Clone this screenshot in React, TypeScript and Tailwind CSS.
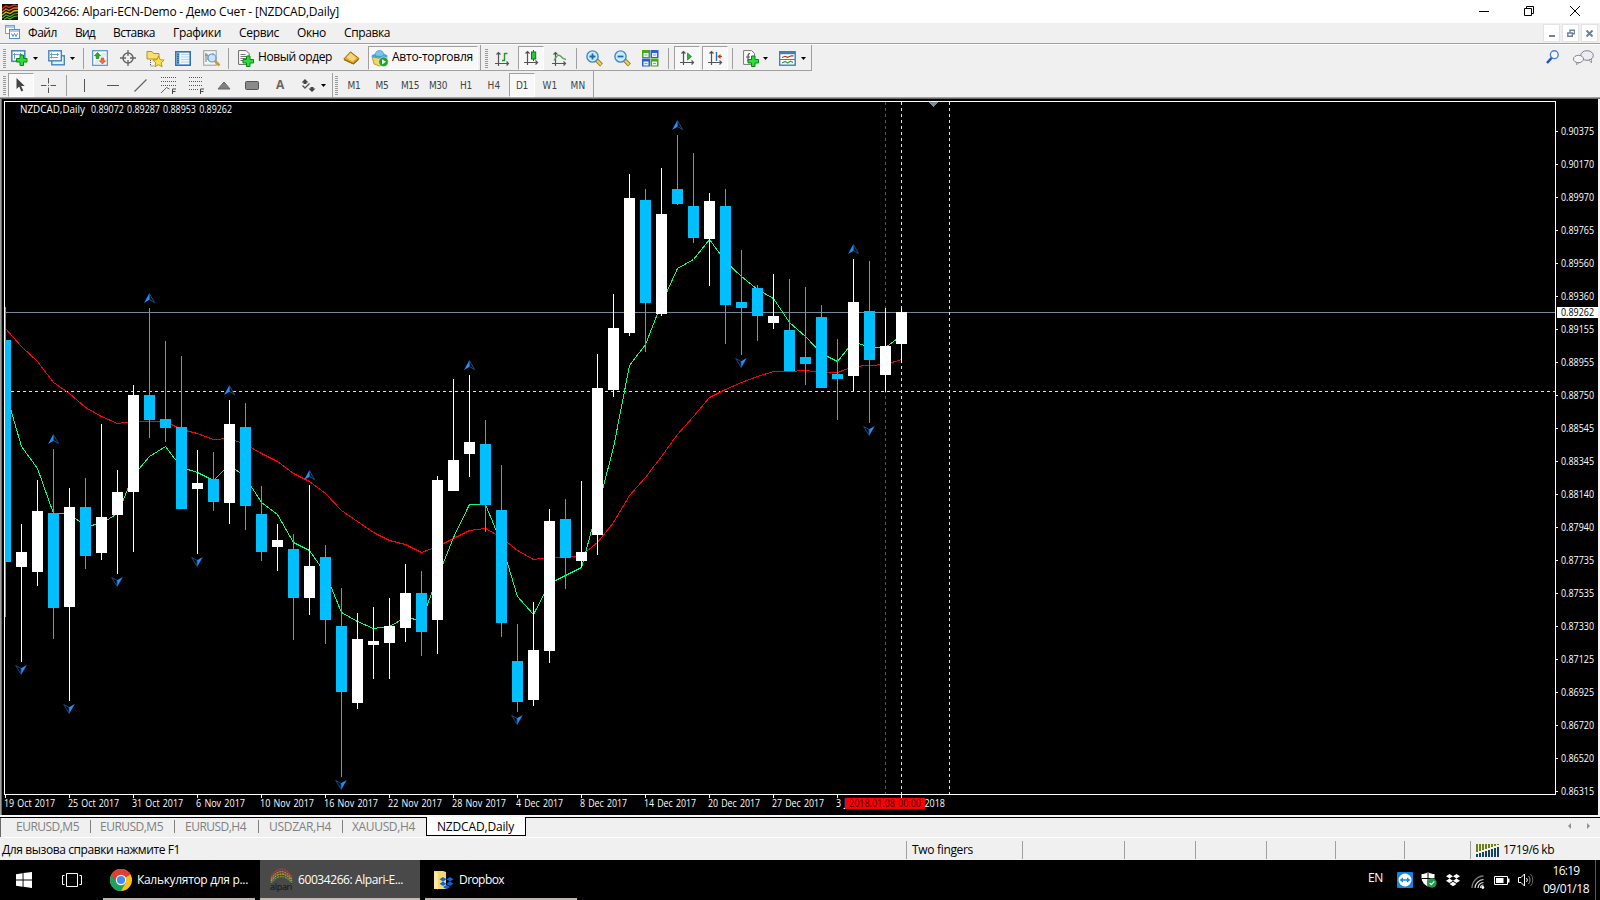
import { useLayoutEffect, useRef, type ReactNode } from "react";

/* ---------- text fitted to a fixed width ---------- */

function Label({ w, children, className = "" }: { w: number; children: string; className?: string }) {
  const ref = useRef<HTMLSpanElement>(null);
  useLayoutEffect(() => {
    const el = ref.current;
    if (!el) return;
    el.style.letterSpacing = "0px";
    const natural = el.getBoundingClientRect().width;
    el.style.letterSpacing = `${(w - natural) / children.length}px`;
  }, [w, children]);
  return (
    <span ref={ref} className={`inline-block shrink-0 whitespace-pre ${className}`}>
      {children}
    </span>
  );
}

/* ---------- toolbar pieces ---------- */

function Icon({ w, h, className = "", children }: { w: number; h: number; className?: string; children: ReactNode }) {
  return (
    <svg width={w} height={h} viewBox={`0 0 ${w} ${h}`} fill="none" className={`shrink-0 ${className}`}>
      {children}
    </svg>
  );
}

function Grip() {
  return (
    <div className="flex w-2 shrink-0 justify-center">
      <Icon w={3} h={19}>
        {[0, 2, 4, 6, 8, 10, 12, 14, 16, 18].map((y) => (
          <rect key={y} x="0" y={y} width="3" height="1" fill="#9a9a9a" />
        ))}
      </Icon>
    </div>
  );
}

function Sep() {
  return <div className="h-[21px] w-px shrink-0 bg-[#a0a0a0]" />;
}

function Caret() {
  return (
    <Icon w={5} h={3}>
      <path d="M0 0h5L2.5 3z" fill="#000" />
    </Icon>
  );
}

function Plus({ x, y }: { x: number; y: number }) {
  return (
    <path
      transform={`translate(${x} ${y})`}
      d="M4 .5h3.5V4H11v3.5H7.5V11H4V7.5H.5V4H4z"
      fill="#2fdc3c"
      stroke="#078a12"
    />
  );
}

function Axes() {
  return (
    <g stroke="#555" strokeWidth="1.2">
      <path d="M3.500 1v14M0 12.500h14M1.500 3.500l2-2 2 2M11.500 10.500l2 2-2 2" />
    </g>
  );
}

const pressed =
  "flex shrink-0 items-center justify-center border border-t-[#a0a0a0] border-l-[#a0a0a0] border-b-white border-r-white bg-[#f8f8f8]";

function Magnifier({ minus = false }: { minus?: boolean }) {
  return (
    <Icon w={18} h={17}>
      <path d="M10.5 10l5 5" stroke="#9b7a16" strokeWidth="4" />
      <path d="M10.5 10l4.6 4.6" stroke="#f2cf56" strokeWidth="2.2" />
      <circle cx="6.5" cy="6.5" r="5.6" fill="#cdeafd" stroke="#3d8bc4" strokeWidth="1.4" />
      <path d={minus ? "M3.5 6.5h6" : "M3.5 6.5h6M6.5 3.5v6"} stroke="#1e6aa8" strokeWidth="1.8" />
    </Icon>
  );
}

function MainToolbar() {
  return (
    <div className="flex h-[26px] w-[812px] items-center border-b border-r border-[#a0a0a0] pt-px">
      <div className="flex w-[11px] shrink-0"><Grip /></div>
      <div className="flex w-[37px] shrink-0 items-center gap-[5px]">
        <Icon w={17} h={16}>
          <rect x=".8" y=".8" width="13" height="10.5" fill="#fff" stroke="#4384bd" strokeWidth="1.5" />
          <path d="M3.5 3v6M2 4.500h9M9.500 3v4" stroke="#6aa0cc" />
          <Plus x={5} y={4.500} />
        </Icon>
        <Caret />
      </div>
      <div className="flex w-[35px] shrink-0 items-center gap-[5px]">
        <Icon w={17} h={16}>
          <rect x="3.800" y="5.800" width="12.500" height="9" fill="#e5f1fa" stroke="#4384bd" strokeWidth="1.4" />
          <rect x=".8" y=".8" width="12.500" height="10" fill="#fff" stroke="#4384bd" strokeWidth="1.4" />
          <path d="M3.500 2.500v6M2 4.500h9M9.500 3v3M2 7.500h8" stroke="#6aa0cc" />
        </Icon>
        <Caret />
      </div>
      <Sep />
      <Icon w={16} h={16} className="ml-[8px]">
        <rect x=".7" y=".7" width="14.600" height="14.600" fill="#fff" stroke="#4e93cd" strokeWidth="1.2" />
        <path d="M9 4h5M9 6h5M3 11h4M3 13h4" stroke="#c6d6e6" />
        <path d="M5.500 2.500l3.200 3.200H6.900V8.500H4.100V5.700H2.300z" fill="#28b02c" stroke="#0d7d12" strokeWidth=".6" />
        <path d="M10.500 14l3.200-3.200h-1.800V8H9.100v2.800H7.300z" fill="#f2703c" stroke="#c33f12" strokeWidth=".6" />
      </Icon>
      <Icon w={16} h={16} className="ml-[12px]">
        <circle cx="8" cy="8" r="5" stroke="#666" strokeWidth="1.500" />
        <path d="M8 0v6M8 10v6M0 8h6M10 8h6" stroke="#666" strokeWidth="1.300" />
      </Icon>
      <Icon w={19} h={17} className="ml-[10px]">
        <path d="M1 9V1.500h5l1.500 2H13V9z" fill="#f7df73" stroke="#b8921f" />
        <path d="M4.500 10v6h3" stroke="#555" strokeDasharray="1 1" />
        <path d="M12.500 6l1.700 3.700 4 .4-3 2.700.9 4-3.600-2.100-3.600 2.100.9-4-3-2.700 4-.4z" fill="#fbe04e" stroke="#b88a12" strokeWidth=".9" />
      </Icon>
      <Icon w={16} h={15} className="ml-[10px]">
        <rect x=".8" y=".8" width="14.400" height="13.400" fill="#f2f8ff" stroke="#2f74b8" strokeWidth="1.600" />
        <path d="M3 1.500v12" stroke="#5b9bd8" strokeWidth="2.600" />
        <path d="M3 3v10" stroke="#17345a" strokeDasharray="1 1" />
        <path d="M6 3.500h8M6 6h8M6 8.500h8M6 11h8" stroke="#b7d1ea" />
      </Icon>
      <Icon w={19} h={17} className="ml-[12px]">
        <rect x=".7" y=".7" width="12.500" height="14.500" fill="#f5f5f5" stroke="#9a9a9a" />
        <path d="M3 3v9M5 5v5M10 3v3M2 5h3" stroke="#777" />
        <path d="M12 11l4.500 4.500" stroke="#c79d2c" strokeWidth="2.600" />
        <circle cx="9" cy="8" r="4" fill="#bfe0f5cc" stroke="#5c9fd0" strokeWidth="1.200" />
      </Icon>
      <div className="w-[6px] shrink-0" />
      <Sep />
      <Icon w={17} h={17} className="ml-[9px]">
        <path d="M.6.6h7.500l3 3v10.800H.6z" fill="#fff" stroke="#666" />
        <path d="M2.500 4.500h5M2.500 6.500h6M2.500 8.500h6M2.500 10.500h3" stroke="#777" />
        <Plus x={4.500} y={5.500} />
      </Icon>
      <Label w={74} className="ml-[3px] text-[12px] leading-[16px] -mt-[3px]">Новый ордер</Label>
      <Icon w={17} h={14} className="ml-[11px]">
        <path d="M.8 8L7.500.8 16 7.500 10.500 13z" fill="#e0aa34" stroke="#9a6b12" />
        <path d="M3.500 6.500L7.500 2l6 5-4 3.500z" fill="#f7d478" />
        <path d="M1 8.800l9.500 4 5-4.500" stroke="#9a6b12" strokeWidth="1.200" />
      </Icon>
      <div className={`${pressed} ml-[8px] h-[24px] w-[110px] justify-start`}>
        <Icon w={18} h={17} className="ml-[2px]">
          <path d="M1 6.500h15l-1.500 8L8.500 16 3 14z" fill="#f5d45c" stroke="#b08b1c" strokeWidth=".8" />
          <ellipse cx="8.500" cy="6" rx="8" ry="2.600" fill="#4ea3d8" />
          <path d="M4 5.500C4 2 6 .5 8.500.5S13 2 13 5.500c-2 1.200-7 1.200-9 0z" fill="#79c4ea" stroke="#3b89ba" strokeWidth=".6" />
          <circle cx="12.500" cy="11.800" r="4.800" fill="#18a528" stroke="#fff" strokeWidth=".5" />
          <path d="M11 9.200v5.200l4-2.600z" fill="#fff" />
        </Icon>
        <Label w={81} className="ml-[3px] text-[12px] leading-[16px] -mt-[3px]">Авто-торговля</Label>
      </div>
      <div className="w-[2px] shrink-0" />
      <div className="h-[26px] w-px shrink-0 bg-[#a0a0a0]" />
      <div className="flex w-[9px] shrink-0 justify-end"><Grip /></div>
      <Icon w={15} h={15} className="ml-[5px]">
        <Axes />
        <path d="M9.500 2v8M9.500 2.500h3M7 9.500h3" stroke="#1f9a2a" strokeWidth="1.400" />
      </Icon>
      <div className={`${pressed} ml-[8px] h-[24px] w-[26px]`}>
        <Icon w={15} h={16}>
          <Axes />
          <path d="M9.500 0v11" stroke="#0b7a14" />
          <rect x="7.500" y="2" width="4.200" height="7" fill="#2bc93a" stroke="#0b7a14" />
        </Icon>
      </div>
      <Icon w={15} h={15} className="ml-[8px]">
        <Axes />
        <path d="M2 9.500C5 4 7 3 9 5.500s3 3 5 3" stroke="#4ea856" strokeWidth="1.400" />
      </Icon>
      <div className="w-[9px] shrink-0" />
      <Sep />
      <div className="w-[9px] shrink-0" />
      <Magnifier />
      <div className="w-[10px] shrink-0" />
      <Magnifier minus />
      <Icon w={17} h={17} className="ml-[10px]">
        <rect width="8" height="8" fill="#4aa51c" />
        <rect x="8.500" width="8" height="8" fill="#2f5fcf" />
        <rect y="8.500" width="8" height="8" fill="#2f5fcf" />
        <rect x="8.500" y="8.500" width="8" height="8" fill="#4aa51c" />
        <path d="M1.500 3h5v4h-5zM10 3h5v4h-5zM1.500 11.500h5v4h-5zM10 11.500h5v4h-5z" fill="#e8f2ff" />
        <path d="M2.500 5h3M11 5h3M2.500 13.500h3M11 13.500h3" stroke="#7aa0d8" />
      </Icon>
      <div className="w-[9px] shrink-0" />
      <Sep />
      <div className={`${pressed} ml-[5px] h-[24px] w-[26px]`}>
        <Icon w={15} h={16}>
          <Axes />
          <path d="M7.500 3v7l4-3.500z" fill="#25b533" stroke="#0f8219" strokeWidth=".7" />
        </Icon>
      </div>
      <div className={`${pressed} ml-[2px] h-[24px] w-[26px]`}>
        <Icon w={15} h={16}>
          <Axes />
          <path d="M8.500 2v9" stroke="#2f6da8" strokeWidth="1.400" />
          <path d="M14 6.500h-4" stroke="#b5401b" strokeWidth="1.400" />
          <path d="M9.500 6.500l3-2.500v5z" fill="#b5401b" />
        </Icon>
      </div>
      <div className="w-[4px] shrink-0" />
      <Sep />
      <Icon w={17} h={17} className="ml-[10px]">
        <path d="M.6.6h8l3 3v10.800H.6z" fill="#fff" stroke="#777" />
        <path d="M7 3.500c-2 0-2 1-2 3v5M3 7h4" stroke="#555" strokeWidth="1.200" />
        <Plus x={4.500} y={5.500} />
      </Icon>
      <div className="w-[3px] shrink-0" />
      <Caret />
      <Icon w={17} h={15} className="ml-[11px]">
        <rect x=".7" y=".7" width="15.500" height="13.500" fill="#fff" stroke="#3d7fb9" strokeWidth="1.400" />
        <path d="M1 2h15" stroke="#3d7fb9" strokeWidth="2.400" />
        <path d="M1 8.500h15" stroke="#3d7fb9" />
        <path d="M3 6.500l3-1.200 2.500 1 4-1.500h2" stroke="#a2391c" strokeWidth="1.200" />
        <path d="M3 12l3-1.500 2.500 1.500 3-1.800 2.500 1.300" stroke="#2fa33c" strokeWidth="1.200" />
      </Icon>
      <div className="w-[5px] shrink-0" />
      <Caret />
    </div>
  );
}

const periods: [string, number][] = [
  ["M1", 13], ["M5", 13], ["M15", 18], ["M30", 18], ["H1", 12], ["H4", 13], ["D1", 12], ["W1", 15], ["MN", 15],
];

function LineToolbar() {
  return (
    <div className="flex h-[26px] w-[594px] items-center border-r border-[#a0a0a0] pt-[2px]">
      <div className="flex w-[8px] shrink-0"><Grip /></div>
      <div className={`${pressed} h-[24px] w-[26px]`}>
        <Icon w={9} h={14} className="-ml-[1px]">
          <path d="M.5 0v11l2.700-2.400L5.300 13.500l2-.9-2.200-4.700h3.600z" fill="#444" />
        </Icon>
      </div>
      <Icon w={16} h={15} className="ml-[7px]">
        <path d="M7.500 0v5.500M7.500 9.500V15M0 7.500h5.500M9.500 7.500H15" stroke="#555" />
        <rect x="7" y="7" width="1" height="1" fill="#555" />
      </Icon>
      <div className="w-[9px] shrink-0" />
      <Sep />
      <Icon w={1} h={13} className="ml-[17px]"><path d="M.5 0v13" stroke="#555" /></Icon>
      <Icon w={12} h={1} className="ml-[22px]"><path d="M0 .5h12" stroke="#555" /></Icon>
      <Icon w={13} h={13} className="ml-[15px]"><path d="M.5 12.500l12-12" stroke="#666" strokeWidth="1.200" /></Icon>
      <Icon w={16} h={17} className="ml-[14px]">
        <path d="M0 .5h16M0 4.500h16M0 8.500h16" stroke="#555" strokeDasharray="1 1" />
        <path d="M0 16l5.500-5.500 3 1.500" stroke="#666" />
        <path d="M11.500 17v-5h3.500M11.500 14.500h3" stroke="#444" />
      </Icon>
      <Icon w={15} h={17} className="ml-[12px]">
        <path d="M0 .5h14M0 4.500h14M0 8.500h14M0 12.500h9" stroke="#555" strokeDasharray="1 1" />
        <path d="M11.500 17v-5h3.500M11.500 14.500h3" stroke="#444" />
      </Icon>
      <Icon w={14} h={9} className="ml-[13px]"><path d="M1 8L7 1l6 7z" fill="#808080" stroke="#666" /></Icon>
      <Icon w={14} h={9} className="ml-[14px]"><rect x=".5" y=".5" width="13" height="8" rx="1" fill="#8a8a8a" stroke="#555" /></Icon>
      <span className="ml-[17px] w-[8px] shrink-0 text-[12px] font-bold leading-[14px] text-[#666]">A</span>
      <Icon w={15} h={13} className="ml-[17px]">
        <path d="M4 0l3.500 3.500H5.500V5h-3V3.500H.5z" fill="#444" />
        <path d="M1.500 6.500L4 9l4.500-4.500" stroke="#555" strokeWidth="1.400" />
        <path d="M11 13l3.500-3.500h-2V8h-3v1.500h-2z" fill="#444" />
      </Icon>
      <div className="w-[5px] shrink-0" />
      <Caret />
      <div className="w-[6px] shrink-0" />
      <div className="h-[24px] w-px shrink-0 bg-[#a0a0a0]" />
      <div className="flex w-[7px] shrink-0 justify-end"><Grip /></div>
      {periods.map(([p, w]) => (
        <div
          key={p}
          className={
            p === "D1"
              ? `${pressed} h-[24px] w-[26px] mx-px`
              : "flex w-[28px] shrink-0 items-center justify-center"
          }
        >
          <Label w={w} className="pt-px font-['DejaVu_Sans_Condensed','DejaVu_Sans',sans-serif] text-[10px] leading-[14px] text-[#444]">
            {p}
          </Label>
        </div>
      ))}
    </div>
  );
}

/* ---------- chart ---------- */

// high, low, body top, body bottom (screen y), 1 = rising
const candles: [number, number, number, number, number][] = [
  [307, 617, 340, 562, 0], [524, 662, 552, 567, 1], [480, 586, 511, 572, 1], [449, 639, 513, 608, 0],
  [488, 701, 507, 607, 1], [478, 569, 507, 556, 0], [424, 560, 517, 553, 1], [470, 574, 492, 515, 1],
  [385, 552, 395, 492, 1], [308, 438, 395, 420, 0], [341, 442, 419, 428, 0], [356, 509, 427, 509, 0],
  [450, 554, 483, 489, 1], [452, 511, 479, 502, 0], [400, 524, 424, 503, 1], [403, 530, 427, 506, 0],
  [486, 561, 514, 552, 0], [524, 571, 540, 547, 1], [534, 640, 549, 598, 0], [485, 615, 566, 598, 1],
  [545, 644, 557, 620, 0], [588, 777, 626, 692, 0], [613, 709, 639, 703, 1], [607, 679, 641, 645, 1],
  [598, 679, 626, 643, 1], [564, 642, 593, 628, 1], [571, 656, 593, 632, 0], [476, 654, 480, 620, 1],
  [379, 491, 460, 491, 1], [375, 477, 442, 454, 1], [420, 532, 444, 505, 0], [465, 637, 510, 623, 0],
  [624, 712, 661, 702, 0], [602, 706, 650, 700, 1], [509, 663, 521, 651, 1], [499, 589, 519, 558, 0],
  [481, 567, 552, 561, 1], [354, 555, 388, 535, 1], [294, 397, 328, 390, 1], [174, 336, 198, 333, 1],
  [189, 352, 200, 303, 0], [168, 316, 214, 314, 1], [135, 205, 189, 204, 0], [153, 243, 206, 238, 0],
  [193, 286, 201, 239, 1], [189, 344, 206, 305, 0], [250, 355, 302, 308, 0], [285, 341, 288, 316, 0],
  [274, 329, 316, 323, 1], [279, 371, 330, 371, 0], [287, 385, 357, 364, 0], [305, 388, 317, 388, 0],
  [339, 420, 374, 379, 0], [259, 391, 302, 376, 1], [261, 423, 311, 360, 0], [308, 392, 346, 375, 1],
  [308, 363, 312, 344, 1],
];

const slow = [
  328, 346, 361, 382, 393, 407, 416, 423, 421, 421, 421, 429, 433, 439, 438, 444, 453, 461, 473, 481, 493, 510, 521,
  532, 540, 544, 552, 546, 538, 530, 528, 537, 550, 559, 557, 557, 555, 542, 522, 495, 477, 456, 434, 416, 397, 389,
  382, 376, 371, 371, 370, 372, 372, 366, 365, 364, 359,
];
const fast = [
  391, 446, 468, 513, 513, 526, 523, 513, 475, 456, 446, 467, 472, 480, 464, 477, 502, 514, 542, 550, 573, 612, 621,
  628, 626, 617, 620, 577, 537, 504, 504, 543, 596, 614, 583, 575, 567, 508, 447, 365, 344, 303, 268, 259, 239, 261,
  276, 289, 298, 322, 336, 353, 361, 341, 347, 347, 335,
];

const toPoints = (ys: number[]) => ys.map((y, k) => `${16 * k + 5.5},${y + 0.5}`).join(" ");

const upMarks = [3, 9, 14, 19, 29, 42, 53];
const downMarks = [1, 4, 7, 12, 21, 32, 46, 54];

const prices = [
  "0.90375", "0.90170", "0.89970", "0.89765", "0.89560", "0.89360", "0.89155", "0.88955", "0.88750", "0.88545",
  "0.88345", "0.88140", "0.87940", "0.87735", "0.87535", "0.87330", "0.87125", "0.86925", "0.86720", "0.86520",
  "0.86315",
];
const dates: [string, number][] = [
  ["19 Oct 2017", 51], ["25 Oct 2017", 51], ["31 Oct 2017", 51], ["6 Nov 2017", 49], ["10 Nov 2017", 54],
  ["16 Nov 2017", 54], ["22 Nov 2017", 54], ["28 Nov 2017", 54], ["4 Dec 2017", 47], ["8 Dec 2017", 47],
  ["14 Dec 2017", 52], ["20 Dec 2017", 52], ["27 Dec 2017", 52], ["3 Jan 2018", 45], ["9 Jan 2018", 45],
];

function ChartText({ x, y, w, fill = "#fff", children }: { x: number; y: number; w: number; fill?: string; children: string }) {
  return (
    <text x={x} y={y} textLength={w} lengthAdjust="spacingAndGlyphs" fill={fill} fontSize="10" wordSpacing="1" xmlSpace="preserve">
      {children}
    </text>
  );
}

function Chart() {
  return (
    <svg
      width="1598"
      height="716"
      viewBox="0 99 1598 716"
      className="block shrink-0 bg-black font-['Open_Sans','Noto_Sans',sans-serif]"
    >
      <g shapeRendering="crispEdges" fill="none">
        <path d="M0 99h1v716h-1z" fill="#a0a0a0" />
        <path d="M1 99h1v716h-1z" fill="#696969" />
        <path d="M5 312.500H1555" stroke="#778899" />
        <path d="M5 391.500H1555" stroke="#ff0" strokeDasharray="3 3" />
        <path d="M885.500 102V794" stroke="#f01414" strokeDasharray="3 3" />
        <path d="M901.500 102V794M949.500 102V794" stroke="#ff0" strokeDasharray="3 3" />
        <path d="M929 102h9v1h-1v1h-1v1h-1v1h-1v1h-1v-1h-1v-1h-1v-1h-1v-1h-1z" fill="#778899" />
        <polyline points={toPoints(slow)} stroke="#f00" />
        <polyline points={toPoints(fast)} stroke="#00ff7f" />
        {candles.map(([hi, lo, top, bottom, up], k) => (
          <g key={k} fill={up ? "#fff" : "#00bfff"}>
            <rect x={16 * k + 5} y={hi} width="1" height={lo - hi} />
            <rect x={k === 0 ? 5 : 16 * k} y={top} width={k === 0 ? 6 : 11} height={bottom - top} />
          </g>
        ))}
        <path d="M4.500 101.500H1555.500V794.500H4.500z" stroke="#fff" />
        {prices.map((p, i) => (
          <rect key={p} x="1556" y={131 + 33 * i} width="2" height="1" fill="#fff" />
        ))}
        {dates.map(([d], i) => (
          <rect key={d} x={5 + 64 * i} y="795" width="1" height="3" fill="#fff" />
        ))}
      </g>
      {upMarks.map((k) => (
        <g key={k} transform={`translate(${16 * k} ${candles[k][0] - 15})`}>
          <path d="M5.500 0L0 10l5.500-3.300z" fill="#1e90ff" />
          <path d="M5.500 .8l5 8.700-5-3z" fill="none" stroke="#1c5a92" strokeWidth=".9" />
        </g>
      ))}
      {downMarks.map((k) => (
        <g key={k} transform={`translate(${16 * k} ${candles[k][1] + 3})`}>
          <path d="M5 10L10.800 0 5 3.300z" fill="#1e90ff" />
          <path d="M5 9.200L-.3.500 5 3.500z" fill="none" stroke="#1c4f92" strokeWidth=".9" />
        </g>
      ))}
      <ChartText x={20} y={113} w={65}>NZDCAD,Daily</ChartText>
      <ChartText x={91} y={113} w={141}>0.89072 0.89287 0.88953 0.89262</ChartText>
      {prices.map((p, i) => (
        <ChartText key={p} x={1561} y={135 + 33 * i} w={33}>{p}</ChartText>
      ))}
      <rect x="1557" y="307" width="41" height="11" fill="#fff" />
      <ChartText x={1561} y={316} w={33} fill="#000">0.89262</ChartText>
      {dates.map(([d, w], i) => (
        <ChartText key={d} x={4 + 64 * i} y={807} w={w}>{d}</ChartText>
      ))}
      <rect x="845" y="798" width="80" height="11" fill="#f00" />
      <ChartText x={849} y={807} w={72} fill="#300">2018.01.08 00:00</ChartText>
    </svg>
  );
}

/* ---------- page ---------- */

const menu: [string, number, string][] = [
  ["Файл", 29, "ml-[8px]"], ["Вид", 20, "ml-[18px]"], ["Вставка", 42, "ml-[18px]"], ["Графики", 48, "ml-[18px]"],
  ["Сервис", 40, "ml-[18px]"], ["Окно", 29, "ml-[18px]"], ["Справка", 46, "ml-[18px]"],
];

const tabs: [string, number, string][] = [
  ["EURUSD,M5", 63, "w-[91px] pl-[16px]"], ["EURUSD,M5", 63, "w-[84px] pl-[9px]"],
  ["EURUSD,H4", 61, "w-[84px] pl-[10px]"], ["USDZAR,H4", 62, "w-[84px] pl-[10px]"],
  ["XAUUSD,H4", 63, "w-[83px] pl-[9px]"],
];

function TitleBar() {
  return (
    <div className="flex h-[23px] shrink-0 items-center bg-white">
      <Icon w={16} h={16} className="ml-[2px]">
        <rect width="16" height="16" fill="#181008" />
        <path d="M0 5l4-3 3 1.500 5-2.500 4 1" stroke="#d8261c" strokeWidth="1.500" />
        <path d="M0 8l4-3 3 1.500 5-2.500 4 0" stroke="#ee6a1c" strokeWidth="1.300" />
        <path d="M0 11l4-3 4 1.500 4-2.500 4-.5" stroke="#c5c21a" strokeWidth="1.300" />
        <path d="M0 14l4-3 4 1.500 4-2.500 4-.5M2 15.500l3-2 3 1.500 4-2.500 4-.5" stroke="#48b01c" strokeWidth="1.200" />
      </Icon>
      <Label w={316} className="ml-[5px] text-[12px] leading-[16px]">
        60034266: Alpari-ECN-Demo - Демо Счет - [NZDCAD,Daily]
      </Label>
      <div className="grow" />
      <Icon w={10} h={1} className="mr-[35px]"><path d="M0 .5h10" stroke="#000" /></Icon>
      <Icon w={10} h={10} className="mr-[36px] -mt-[2px]">
        <path d="M.5 2.500h7v7h-7zM2.500 2.500v-2h7v7h-2" stroke="#000" />
      </Icon>
      <Icon w={10} h={10} className="mr-[20px] -mt-[2px]"><path d="M0 0l10 10M10 0L0 10" stroke="#000" /></Icon>
    </div>
  );
}

const mdi = "flex h-[18px] w-[17px] items-center justify-center border border-[#e3e3e3] bg-white";

function MenuBar() {
  return (
    <div className="flex h-[21px] shrink-0 items-center border-b border-[#a0a0a0]">
      <Icon w={15} h={14} className="ml-[5px] -mt-[2px]">
        <rect x=".5" y=".5" width="9" height="8" fill="#fff" stroke="#6ba3e0" />
        <rect x="4.500" y="4.500" width="10" height="9" fill="#fff" stroke="#4f8fdc" />
        <path d="M1 2h8M5 6h9" stroke="#8fbcf0" strokeWidth="1.400" />
        <path d="M6.500 8.500l1.500 3 1.500-3 1.500 3 1.500-3" stroke="#5c8fd0" />
      </Icon>
      {menu.map(([m, w, ml]) => (
        <Label key={m} w={w} className={`${ml} text-[12px] leading-[16px]`}>{m}</Label>
      ))}
      <div className="grow" />
      <div className="mr-[2px] flex gap-[2px]">
        <div className={`${mdi} items-end pb-[4px]`}><Icon w={6} h={2}><path d="M0 1h6" stroke="#6f8295" strokeWidth="2" /></Icon></div>
        <div className={mdi}>
          <Icon w={8} h={8}><path d="M.8 4h4.500v3.200H.8zM3 4V1.200h4.500v3.500H5" stroke="#6f8295" strokeWidth="1.400" /></Icon>
        </div>
        <div className={mdi}><Icon w={7} h={7}><path d="M.5.500l6 6M6.500.500l-6 6" stroke="#6f8295" strokeWidth="2" /></Icon></div>
      </div>
    </div>
  );
}

function Tabs() {
  return (
    <div className="flex h-[20px] shrink-0 items-stretch border-t border-black">
      <div className="-mr-px w-px bg-[#696969]" />
      {tabs.map(([t, w, cell], i) => (
        <div key={i} className={`${cell} flex shrink-0 items-center pb-[2px]`}>
          <Label w={w} className="text-[12px] leading-[16px] text-[#808080]">{t}</Label>
          <div className="grow" />
          <div className={i === 4 ? "hidden" : "h-[13px] w-px bg-[#808080]"} />
        </div>
      ))}
      <div className="-mt-px flex h-[19px] w-[100px] items-center border border-t-0 border-black bg-white pl-[10px] pt-px">
        <Label w={77} className="text-[12px] leading-[16px] text-black">NZDCAD,Daily</Label>
      </div>
      <div className="grow" />
      <div className="mr-[10px] flex items-center gap-[16px] pb-1">
        <Icon w={3} h={6}><path d="M3 0v6L0 3z" fill="#909090" /></Icon>
        <Icon w={3} h={6}><path d="M0 0v6l3-3z" fill="#909090" /></Icon>
      </div>
    </div>
  );
}

function StatusBar() {
  return (
    <div className="flex h-[23px] shrink-0 items-end border-t border-white pb-px">
      <div className="flex h-[18px] w-[906px] items-center pl-[2px]">
        <Label w={178} className="text-[12px] leading-[18px]">Для вызова справки нажмите F1</Label>
      </div>
      <div className="flex h-[18px] w-[116px] items-center border-l border-[#a0a0a0] pl-[5px]">
        <Label w={61} className="text-[12px] leading-[18px]">Two fingers</Label>
      </div>
      <div className="h-[18px] w-[102px] border-l border-[#a0a0a0]" />
      <div className="h-[18px] w-[71px] border-l border-[#a0a0a0]" />
      <div className="h-[18px] w-[71px] border-l border-[#a0a0a0]" />
      <div className="h-[18px] w-[69px] border-l border-[#a0a0a0]" />
      <div className="h-[18px] w-[69px] border-l border-[#a0a0a0]" />
      <div className="h-[18px] w-[66px] border-l border-[#a0a0a0]" />
      <div className="flex h-[18px] grow items-center border-l border-[#a0a0a0] pl-[5px]">
        <Icon w={23} h={13}>
          {[0, 1, 2, 3, 4, 5, 6, 7].map((i) => (
            <g key={i}>
              <rect x={i * 3} y="0" width="2" height={8 - i} fill="#6f7f10" />
              <rect x={i * 3} y={10 - i} width="2" height={3 + i} fill="#14425e" />
            </g>
          ))}
        </Icon>
        <Label w={51} className="ml-[4px] text-[12px] leading-[18px]">1719/6 kb</Label>
      </div>
    </div>
  );
}

function DropboxMark({ fill }: { fill: string }) {
  return (
    <g fill={fill}>
      <path d="M3.500 0L7 2.200 3.500 4.400 0 2.200zM10.500 0L14 2.200l-3.500 2.200L7 2.200zM3.500 4.600L7 6.800 3.500 9 0 6.800zM10.500 4.600L14 6.800 10.500 9 7 6.800zM7 7.800l3.500 2.200L7 12.200 3.500 10z" />
    </g>
  );
}

function Taskbar() {
  return (
    <div className="flex h-[40px] shrink-0 items-stretch bg-black text-white">
      <div className="flex items-center">
        <Icon w={16} h={16} className="ml-[16px]">
          <path d="M0 2.200L6.600 1.200V7.500H0zM7.500 1.100L16 0v7.500H7.500zM0 8.400h6.600v6.400L0 13.800zM7.500 8.400H16V16l-8.500-1.200z" fill="#fff" />
        </Icon>
        <Icon w={20} h={14} className="ml-[30px]">
          <path d="M4.500.5h11v13h-11zM2.500 2.500h-2v9h2M17.500 2.500h2v9h-2" stroke="#fff" />
        </Icon>
      </div>
      <div className="ml-[21px] flex w-[152px] items-center border-b-2 border-[#bdb4b0] pl-[7px]">
        <Icon w={22} h={22} className="mt-[2px]">
          <circle cx="11" cy="11" r="11" fill="#fbc116" />
          <path d="M11 11L1.470 5.500A11 11 0 0 1 20.530 5.500z" fill="#dd4132" />
          <path d="M11 11L1.470 5.500A11 11 0 0 0 11 22l4.500-8z" fill="#1da15f" />
          <path d="M11 5.800h9.700a11 11 0 0 0-19.200-.3L6 13z" fill="#dd4132" />
          <circle cx="11" cy="11" r="5.200" fill="#fff" />
          <circle cx="11" cy="11" r="4.100" fill="#4a8af4" />
        </Icon>
        <Label w={111} className="ml-[5px] pt-[2px] text-[12px] leading-[16px]">Калькулятор для р...</Label>
      </div>
      <div className="ml-[5px] flex w-[160px] items-center border-b-2 border-[#c4bab6] bg-[#494949] pl-[10px]">
        <div className="flex w-[23px] shrink-0 flex-col items-start pt-[3px]">
          <Icon w={23} h={15}>
            <g strokeDasharray="2 .7" strokeWidth="1.300">
              <path d="M1 9Q11.500-7 22 9" stroke="#c2392b" />
              <path d="M1 11Q11.500-4 22 11" stroke="#d4702a" />
              <path d="M1 13Q11.500-1 22 13" stroke="#b7a12c" />
              <path d="M1 15Q11.500 2 22 15" stroke="#6c9a2e" />
            </g>
          </Icon>
          <Label w={22} className="-mt-[3px] text-[9px] leading-[13px] text-[#111]">alpari</Label>
        </div>
        <Label w={105} className="ml-[5px] pt-[2px] text-[12px] leading-[16px]">60034266: Alpari-E...</Label>
      </div>
      <div className="ml-[5px] flex w-[152px] items-center border-b-2 border-[#bdb4b0] pl-[9px]">
        <Icon w={20} h={20} className="mt-[2px]">
          <path d="M0 1h9l3 1v17H0z" fill="#f6d774" />
          <path d="M0 1l4 2v16.500L0 18z" fill="#ffe9a2" />
          <g transform="translate(5.500 7)"><DropboxMark fill="#0a64e0" /></g>
        </Icon>
        <Label w={45} className="ml-[5px] pt-[2px] text-[12px] leading-[16px]">Dropbox</Label>
      </div>
      <div className="grow" />
      <div className="flex items-center">
        <Label w={15} className="-mt-[4px] mr-[14px] text-[12px] leading-[16px]">EN</Label>
        <Icon w={16} h={16} className="mr-[8px]">
          <rect width="16" height="16" rx="1" fill="#1584e0" />
          <circle cx="8" cy="8" r="6.500" fill="#fff" />
          <path d="M2.500 8L6 5.500v1.700h4V5.500L13.500 8 10 10.500V8.800H6v1.700z" fill="#1584e0" />
        </Icon>
        <Icon w={16} h={16} className="mr-[9px]">
          <path d="M7 0c2 1.500 4 2 6.500 2 .3 6-1 10-6.500 12.500C1.500 12 .2 8 .500 2 3 2 5 1.500 7 0z" fill="#fff" />
          <path d="M7 0v14M.500 6.500h13" stroke="#000" />
          <circle cx="11" cy="11" r="4.700" fill="#1f9a4a" />
          <path d="M8.700 11l1.600 1.700 3-3.200" stroke="#fff" strokeWidth="1.200" />
        </Icon>
        <Icon w={14} h={13} className="mr-[11px]"><DropboxMark fill="#fff" /></Icon>
        <Icon w={14} h={14} className="mr-[9px] mt-[3px]">
          <path d="M1 13A12 12 0 0 1 12.500 1" stroke="#777" strokeWidth="1.300" />
          <path d="M4 13a9 9 0 0 1 8.500-8.500M7 13a6 6 0 0 1 5.500-5.500M9.500 13a3 3 0 0 1 3-3" stroke="#ddd" strokeWidth="1.200" />
          <circle cx="11.800" cy="12.500" r="1.400" fill="#fff" />
        </Icon>
        <Icon w={16} h={9} className="mr-[8px]">
          <path d="M.5.500h13v8H.5z" stroke="#fff" />
          <rect x="2" y="2" width="7.500" height="5" fill="#fff" />
          <rect x="14" y="2.500" width="1.500" height="4" fill="#fff" />
        </Icon>
        <Icon w={17} h={14}>
          <path d="M.5 4.500H3L6.500 1v12L3 9.500H.500z" stroke="#fff" />
          <path d="M8.500 5a3 3 0 0 1 0 4" stroke="#fff" />
          <path d="M10.500 3a6 6 0 0 1 0 8" stroke="#999" />
          <path d="M12.500 1a9 9 0 0 1 0 12" stroke="#666" />
        </Icon>
        <div className="ml-[8px] flex w-[46px] flex-col items-center gap-[2px]">
          <Label w={27} className="text-[12px] leading-[16px]">16:19</Label>
          <Label w={46} className="text-[12px] leading-[16px]">09/01/18</Label>
        </div>
      </div>
      <div className="ml-[6px] mr-[4px] w-px bg-[#555]" />
    </div>
  );
}

export default function App() {
  return (
    <div className="flex h-[900px] w-[1600px] flex-col overflow-hidden bg-[#f0f0f0] font-['Open_Sans','Noto_Sans',sans-serif] text-black">
      <TitleBar />
      <MenuBar />
      <div className="flex h-[54px] shrink-0 justify-between border-b border-[#a0a0a0] border-t border-t-white">
        <div className="flex flex-col">
          <MainToolbar />
          <LineToolbar />
        </div>
        <div className="flex items-start pr-[6px] pt-[5px]">
          <Icon w={13} h={14} className="mr-[14px]">
            <path d="M1 13l5-5.500" stroke="#2a50c0" strokeWidth="2.600" />
            <circle cx="8.300" cy="4.700" r="3.900" fill="#f4f8ff" stroke="#4a7de0" strokeWidth="1.400" />
          </Icon>
          <Icon w={21} h={15}>
            <ellipse cx="14" cy="5.500" rx="6.300" ry="4.800" fill="#ececf2" stroke="#808088" />
            <path d="M16 10l2.500 3v-4z" fill="#ececf2" stroke="#808088" strokeWidth=".7" />
            <ellipse cx="5.500" cy="9" rx="5" ry="3.700" fill="#f7f7fa" stroke="#808088" />
            <path d="M3.500 12.300v2.500l2.500-2z" fill="#f7f7fa" stroke="#808088" strokeWidth=".7" />
          </Icon>
        </div>
      </div>
      <div className="h-px shrink-0 bg-[#696969]" />
      <Chart />
      <div className="h-[2px] shrink-0 bg-[#f6f6f6]" />
      <Tabs />
      <StatusBar />
      <Taskbar />
    </div>
  );
}
